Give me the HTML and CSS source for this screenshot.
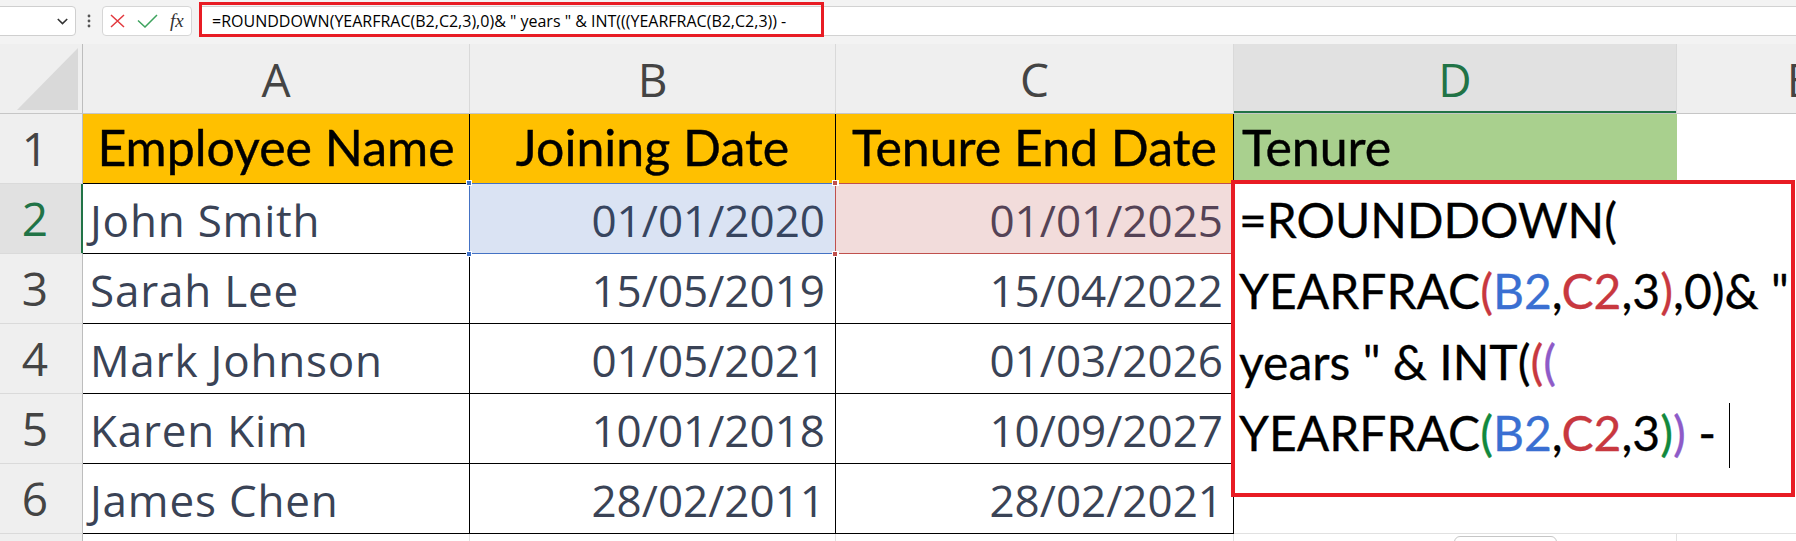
FILE: index.html
```html
<!DOCTYPE html>
<html>
<head>
<meta charset="utf-8">
<link rel="stylesheet" href="styles.css">
</head>
<body>
<div class="app">
  <div class="toolbar">
    <div class="namebox">
      <svg class="chev" width="11" height="7" viewBox="0 0 11 7"><path d="M0.8 1 L5.5 5.6 L10.2 1" fill="none" stroke="#333" stroke-width="1.6"/></svg>
    </div>
    <div class="more">
      <svg width="6" height="14" viewBox="0 0 6 14"><circle cx="3" cy="2" r="1.4" fill="#555"/><circle cx="3" cy="7" r="1.4" fill="#555"/><circle cx="3" cy="12" r="1.4" fill="#555"/></svg>
    </div>
    <div class="fxbox">
      <svg class="ico-x" width="15" height="14" viewBox="0 0 15 14"><path d="M1 1 L14 13 M14 1 L1 13" fill="none" stroke="#e2383e" stroke-width="1.5"/></svg>
      <svg class="ico-ok" width="21" height="14" viewBox="0 0 21 14"><path d="M1 6.5 L8 13 L20 1" fill="none" stroke="#3ea35e" stroke-width="1.5"/></svg>
      <span class="fx">fx</span>
    </div>
    <div class="formula">
      <span class="ftext">=ROUNDDOWN(YEARFRAC(B2,C2,3),0)&amp; " years " &amp; INT(((YEARFRAC(B2,C2,3)) -</span>
      <div class="annot"></div>
    </div>
  </div>

  <div class="sheet">
    <!-- column headers -->
    <div class="corner"><svg width="82" height="69" viewBox="0 0 82 69"><polygon points="78,4 78,66 17,66" fill="#d9d9d9"/></svg></div>
    <div class="colhead">A</div>
    <div class="colhead">B</div>
    <div class="colhead">C</div>
    <div class="colhead sel">D</div>
    <div class="colhead">E</div>

    <!-- row 1 -->
    <div class="rowhead">1</div>
    <div class="cell hdr">Employee Name</div>
    <div class="cell hdr">Joining Date</div>
    <div class="cell hdr">Tenure End Date</div>
    <div class="cell tenure">Tenure</div>
    <div class="cell blank"></div>

    <!-- row 2 -->
    <div class="rowhead sel">2</div>
    <div class="cell data name">John Smith</div>
    <div class="cell data num selb">01/01/2020<span class="hdl hb tl"></span><span class="hdl hb bl"></span><span class="hdl hb tr"></span><span class="hdl hb br"></span></div>
    <div class="cell data num selc">01/01/2025<span class="hdl hc tl"></span><span class="hdl hc bl"></span><span class="hdl hc tr"></span><span class="hdl hc br"></span></div>
    <div class="cell blank edit-host">
      <div class="editbox">
        <div class="fline">=ROUNDDOWN(</div>
        <div class="fline">YEARFRAC<span class="r">(</span><span class="b">B2</span>,<span class="r">C2</span>,3<span class="r">)</span>,0)&amp; "</div>
        <div class="fline">years " &amp; INT(<span class="r">(</span><span class="p">(</span></div>
        <div class="fline">YEARFRAC<span class="g">(</span><span class="b">B2</span>,<span class="r">C2</span>,3<span class="g">)</span><span class="p">)</span> -<span class="caret"></span></div>
      </div>
      <div class="editmark"></div>
    </div>
    <div class="cell blank"></div>

    <!-- row 3 -->
    <div class="rowhead">3</div>
    <div class="cell data name">Sarah Lee</div>
    <div class="cell data num">15/05/2019</div>
    <div class="cell data num">15/04/2022</div>
    <div class="cell blank"></div>
    <div class="cell blank"></div>

    <!-- row 4 -->
    <div class="rowhead">4</div>
    <div class="cell data name">Mark Johnson</div>
    <div class="cell data num">01/05/2021</div>
    <div class="cell data num">01/03/2026</div>
    <div class="cell blank"></div>
    <div class="cell blank"></div>

    <!-- row 5 -->
    <div class="rowhead">5</div>
    <div class="cell data name">Karen Kim</div>
    <div class="cell data num">10/01/2018</div>
    <div class="cell data num">10/09/2027</div>
    <div class="cell blank"></div>
    <div class="cell blank"></div>

    <!-- row 6 -->
    <div class="rowhead">6</div>
    <div class="cell data name">James Chen</div>
    <div class="cell data num">28/02/2011</div>
    <div class="cell data num">28/02/2021</div>
    <div class="cell blank last"></div>
    <div class="cell blank last"></div>

    <!-- row 7 (only its top edge is visible) -->
    <div class="rowhead"></div>
    <div class="cell empty"></div>
    <div class="cell empty"></div>
    <div class="cell empty"></div>
    <div class="cell empty"></div>
    <div class="cell empty"></div>
  </div>

  <div class="tip"></div>
</div>
</body>
</html>
```

FILE: styles.css
```css
* { box-sizing: border-box; }
html, body { margin: 0; padding: 0; }
body {
  width: 1796px;
  height: 541px;
  overflow: hidden;
  background: #f0f0f0;
  font-family: "Open Sans", "Noto Sans", sans-serif;
}
.app {
  position: relative;
  width: 1796px;
  height: 541px;
  overflow: hidden;
}

/* ---------- formula toolbar ---------- */
.toolbar {
  height: 44px;
  display: flex;
  align-items: flex-start;
  padding-top: 6px;
  background: #f3f3f3;
}
.namebox {
  flex: none;
  width: 82px;
  height: 30px;
  margin-left: -6px;
  background: #fff;
  border: 1px solid #cfcfcf;
  border-radius: 4px;
  display: flex;
  align-items: center;
  justify-content: flex-end;
  padding-right: 7px;
}
.more {
  flex: none;
  width: 26px;
  height: 30px;
  display: flex;
  align-items: center;
  justify-content: center;
}
.fxbox {
  flex: none;
  width: 90px;
  height: 30px;
  background: #fff;
  border: 1px solid #d6d6d6;
  border-radius: 4px;
  display: flex;
  align-items: center;
  padding-left: 7px;
}
.ico-x { flex: none; }
.ico-ok { flex: none; margin-left: 12px; }
.fx {
  margin-left: 12px;
  font-family: "Liberation Serif", serif;
  font-style: italic;
  font-size: 19px;
  color: #333;
  line-height: 28px;
}
.formula {
  position: relative;
  flex: 1;
  margin-left: 7px;
  height: 30px;
  background: #fff;
  border-top: 1px solid #d2d2d2;
  border-bottom: 1px solid #d2d2d2;
  padding-left: 13px;
  font-size: 16px;
  line-height: 28px;
  color: #000;
  white-space: nowrap;
}
.annot {
  position: absolute;
  left: 0;
  top: -5px;
  width: 625px;
  height: 35px;
  border: 3px solid #e81c24;
}

/* ---------- sheet grid ---------- */
.sheet {
  display: grid;
  grid-template-columns: 83px 387px 366px 398px 443px 246px;
  grid-auto-rows: 70px;
  width: 1923px;
}
.corner {
  background: #efefef;
  border-right: 1px solid #bdbdbd;
  border-bottom: 1px solid #c6c6c6;
}
.corner svg { display: block; }
.colhead {
  background: #efefef;
  border-right: 1px solid #d9d9d9;
  border-bottom: 1px solid #c6c6c6;
  text-align: center;
  font-size: 46px;
  padding-top: 2px;
  line-height: 66px;
  color: #444;
}
.colhead.sel {
  background: #e1e1e1;
  color: #217346;
  box-shadow: inset 0 -2px 0 #217346;
}
.rowhead {
  background: #efefef;
  border-right: 1px solid #bdbdbd;
  border-bottom: 1px solid #dadada;
  text-align: center;
  padding-right: 12px;
  font-size: 46px;
  padding-top: 1px;
  line-height: 66px;
  color: #444;
}
.rowhead.sel {
  background: #e1e1e1;
  color: #217346;
  border-right-color: #217346;
  box-shadow: inset -1px 0 0 #217346;
}
.cell {
  background: #fff;
  border-right: 1px solid #000;
  border-bottom: 1px solid #000;
  white-space: nowrap;
  overflow: visible;
}
.hdr {
  background: #ffc000;
  font-family: "Lato", sans-serif;
  font-size: 50px;
  line-height: 66px;
  text-align: center;
  color: #000;
  -webkit-text-stroke: 0.4px #000;
}
.tenure {
  background: #a9d08e;
  border-right: none;
  border-bottom: 1px solid #a9d08e;
  font-family: "Lato", sans-serif;
  font-size: 50px;
  line-height: 66px;
  padding-left: 8px;
  color: #000;
  -webkit-text-stroke: 0.4px #000;
}
.blank {
  border-right: none;
  border-bottom: none;
}
.blank.last { border-bottom: 1px solid #e1e1e1; }
.empty {
  border-right: 1px solid #e1e1e1;
  border-bottom: 1px solid #e1e1e1;
}
.data {
  font-size: 44px;
  padding-top: 3px;
  line-height: 66px;
  padding-left: 7px;
  color: #3a4356;
}
.name { letter-spacing: 0.8px; }
.num {
  text-align: right;
  padding-left: 0;
  padding-right: 10px;
}

/* selection highlights */
.selb, .selc { position: relative; }
.selb { background: #dae3f3; color: #37455f; }
.selc { background: #f2dcdb; color: #554356; }
.selb::before, .selc::before {
  content: "";
  position: absolute;
  left: -1px;
  top: -1px;
  right: -1px;
  bottom: -1px;
  border: 1px solid #4472c4;
}
.selc::before { border-color: #c0504d; }
.hdl {
  position: absolute;
  width: 6px;
  height: 6px;
  border: 1px solid #fff;
  z-index: 2;
}
.hb { background: #3f72c9; }
.hc { background: #c0504d; }
.hdl.tl { left: -4px; top: -4px; }
.hdl.bl { left: -4px; bottom: -4px; }
.hdl.tr { right: -4px; top: -4px; }
.hdl.br { right: -4px; bottom: -4px; }

/* in-cell edit box */
.edit-host { position: relative; z-index: 3; }
.editbox {
  position: absolute;
  left: 0;
  top: 0;
  width: 562px;
  height: 349px;
  background: #fff;
  padding-left: 5px;
  font-family: "Lato", sans-serif;
  font-size: 48px;
  line-height: 71px;
  color: #000;
  -webkit-text-stroke: 0.3px #000;
}
.fline { white-space: nowrap; }
.r { color: #c8383f; -webkit-text-stroke-color: #c8383f; }
.b { color: #3a6fd2; -webkit-text-stroke-color: #3a6fd2; }
.p { color: #8e5bc8; -webkit-text-stroke-color: #8e5bc8; }
.g { color: #12893d; -webkit-text-stroke-color: #12893d; }
.caret {
  display: inline-block;
  width: 1px;
  height: 65px;
  margin-left: 13px;
  background: #000;
  vertical-align: -17px;
}
.editmark {
  position: absolute;
  left: -3px;
  top: -4px;
  width: 564px;
  height: 317px;
  border: 4px solid #e81c24;
}

/* tooltip edge at the bottom */
.tip {
  position: absolute;
  left: 1454px;
  top: 536px;
  width: 103px;
  height: 24px;
  background: #fff;
  border: 1px solid #c6c6c6;
  border-radius: 6px;
}
```
